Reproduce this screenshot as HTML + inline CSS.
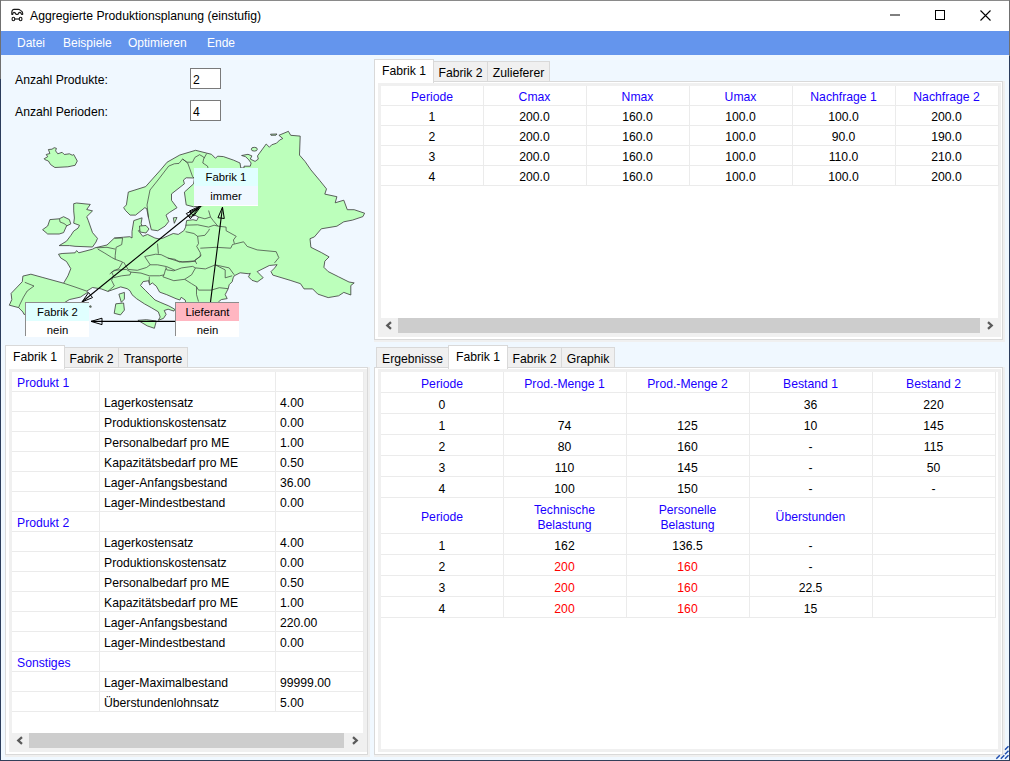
<!DOCTYPE html><html><head><meta charset="utf-8"><style>
html,body{margin:0;padding:0;width:1010px;height:761px;overflow:hidden;background:#F0F8FF;}
body{position:relative;font-family:"Liberation Sans",sans-serif;font-size:12.2px;color:#000;}
div{box-sizing:border-box;}
</style></head><body>
<div style="position:absolute;left:0px;top:0px;width:1010px;height:31px;background:#fff;"></div>
<div style="position:absolute;left:0px;top:31px;width:1010px;height:24px;background:#6495ED;"></div>
<div style="position:absolute;left:0px;top:0px;width:1010px;height:1px;background:#8a8a8a;"></div>
<div style="position:absolute;left:0px;top:0px;width:1px;height:79px;background:#707070;"></div>
<div style="position:absolute;left:0px;top:79px;width:1px;height:682px;background:#2b3d5c;"></div>
<div style="position:absolute;left:1009px;top:0px;width:1px;height:56px;background:#707070;"></div>
<div style="position:absolute;left:1009px;top:56px;width:1px;height:705px;background:#2b3d5c;"></div>
<div style="position:absolute;left:0px;top:760px;width:1010px;height:1px;background:#33405a;"></div>
<svg style="position:absolute;left:0;top:0" width="30" height="30" viewBox="0 0 30 30">
<path d="M11.8 14.3 L11.8 12.2 Q12 9.4 14.2 9.3 L18.2 9.3 Q19.3 9.4 20.4 10.4 L21.4 11.1 Q22.7 11.8 22.7 13.4 L22.7 14.3 L21.6 14.3 Q21 12.4 19.8 12.4 Q18.6 12.4 18 14.3 L16 14.3 Q15.2 12.3 14 12.3 Q12.9 12.4 12.8 14.3 Z" fill="none" stroke="#1a1a1a" stroke-width="1.15" stroke-linejoin="round"/>
<ellipse cx="13.4" cy="19" rx="1.35" ry="1.75" fill="none" stroke="#1a1a1a" stroke-width="1.15"/>
<ellipse cx="20.6" cy="19" rx="1.35" ry="1.75" fill="none" stroke="#1a1a1a" stroke-width="1.15"/>
<line x1="14.7" y1="19" x2="19.3" y2="19" stroke="#1a1a1a" stroke-width="1.15"/>
</svg>
<div style="position:absolute;left:30px;top:8px;height:16px;line-height:16px;text-align:left;white-space:nowrap;font-size:12.2px;color:#000;">Aggregierte Produktionsplanung (einstufig)</div>
<svg style="position:absolute;left:880px;top:8px" width="120" height="16">
<line x1="10" y1="7" x2="20" y2="7" stroke="#000" stroke-width="1"/>
<rect x="935.5" y="0" width="0" height="0"/>
</svg>
<div style="position:absolute;left:935px;top:10px;width:10px;height:10px;border:1px solid #000;"></div>
<svg style="position:absolute;left:980px;top:9.5px" width="12" height="12"><path d="M0.5 0.5 L10.5 10.5 M10.5 0.5 L0.5 10.5" stroke="#000" stroke-width="1.1"/></svg>
<div style="position:absolute;left:17px;top:35px;height:16px;line-height:16px;text-align:left;white-space:nowrap;color:#fff;font-size:12px;">Datei</div>
<div style="position:absolute;left:63px;top:35px;height:16px;line-height:16px;text-align:left;white-space:nowrap;color:#fff;font-size:12px;">Beispiele</div>
<div style="position:absolute;left:128px;top:35px;height:16px;line-height:16px;text-align:left;white-space:nowrap;color:#fff;font-size:12px;">Optimieren</div>
<div style="position:absolute;left:207px;top:35px;height:16px;line-height:16px;text-align:left;white-space:nowrap;color:#fff;font-size:12px;">Ende</div>
<div style="position:absolute;left:15px;top:72px;height:16px;line-height:16px;text-align:left;white-space:nowrap;">Anzahl Produkte:</div>
<div style="position:absolute;left:15px;top:104px;height:16px;line-height:16px;text-align:left;white-space:nowrap;">Anzahl Perioden:</div>
<div style="position:absolute;left:190px;top:68px;width:31px;height:21px;background:#fff;border:1px solid #7a7a7a;"></div>
<div style="position:absolute;left:193px;top:72px;height:16px;line-height:16px;text-align:left;white-space:nowrap;">2</div>
<div style="position:absolute;left:190px;top:100px;width:31px;height:21px;background:#fff;border:1px solid #7a7a7a;"></div>
<div style="position:absolute;left:193px;top:104px;height:16px;line-height:16px;text-align:left;white-space:nowrap;">4</div>
<svg style="position:absolute;left:0;top:0" width="380" height="345" viewBox="0 0 380 345">
<polygon points="9.3,305.2 11.8,299.6 11.1,293.4 22.3,281.7 22.9,276.1 30.9,274.2 42.1,277.3 63.6,283.2 67.9,275.9 70.8,268.7 66.5,261.5 60.7,257.9 58.5,254.2 62.1,253.5 75.1,252.8 76.6,250.6 78.8,252.8 92.5,249.2 95,247.8 107,245 114.3,238.1 123.5,237.2 129.9,236.7 132,238 132,231.6 133.8,220.6 142.1,217.8 141.1,223.3 143,228.9 138.4,230.7 142.8,236.3 147.6,234.4 154.9,238 159.4,239 163.2,238 173.2,233.5 178.3,234.4 183.8,230.7 185.6,227.1 186.6,220.6 193,219.7 196.7,220.6 198.5,217 194.8,215.1 189.3,217 191.1,212.4 197.6,208.7 201.3,205 204,205.5 193.6,206.8 186.2,204.9 184.4,192.1 193.6,183.8 194.5,178 186.2,177.8 183.4,180.1 184.4,183.8 171.5,193.9 171.5,200.3 177,207.7 169.7,212.3 166,215.1 168.7,221.5 165.1,226.1 157.7,230.7 151.3,229.8 148.5,217.8 146.7,208.6 144.8,207.7 135.6,215.1 130.1,215.1 125.5,210.5 123.7,207.7 126.4,204.9 128.3,192.1 145.7,186.6 160.5,170 167.1,162.2 179.8,155 195.6,150.3 206.7,153.1 211.5,154.3 215.4,158.2 217.8,156.2 223.4,156.6 233.7,160.2 240,163 240.8,168 244,168 244,166.2 250.3,166.2 251.1,163 248.8,159.9 245.6,156.7 241.6,155.5 248,154.3 251.9,155.9 250.3,159.1 255.1,161.4 258.3,159.1 257.5,155.9 266.2,144 269.4,147.2 271.7,144.8 276.5,143.2 279.7,140 282.8,138.5 278.9,135.3 288.4,131.3 290.7,135.3 300.2,136.1 299.5,155.1 305,161.4 310.9,169.9 319.6,180.3 326.5,188.9 324.8,194.1 336.9,196.7 335.2,202.8 343.8,200.2 347.3,209.7 354.2,209.7 364.6,213.2 362.9,216.6 352.5,220.1 343.8,221.8 336.9,226.2 321.3,228.8 314.4,236.9 310,238.7 310.9,247.3 321.3,252.5 329.1,256.9 324.8,261.2 323.9,267.3 328.2,271.6 338.6,276.8 349,282 354.2,282.9 350.8,285.5 350.8,295 343.8,292.4 338.6,295.8 328.2,297.6 317.8,294.1 312.6,288.9 304,288.9 300.5,283.7 290.1,280.3 272.8,275.1 271,271.6 274.5,268.1 277.1,264.7 269.3,265.5 257.2,271.6 260.6,275.1 263.2,277.7 257.2,282 252,280.3 248.5,276.8 250.3,273.3 249,273.8 240.1,272.8 234.2,275.8 233.2,277.8 232.2,281.7 229.2,284.7 228.2,288.7 225.2,294.6 227.2,298.6 221.3,299.6 218.3,302 215,310 190,310 185.6,302 185.2,300 181.2,297.3 179.9,300 176,298.7 166.8,294.7 159.6,292.1 156.3,286.2 152.3,282.9 149.7,284.9 148.4,280.3 147.7,280.9 143.1,281.6 140.5,285.5 145.8,290.8 149.7,294.7 155,300 160.9,302.6 168.8,305.9 174.7,309.2 174,311.1 168.1,309.2 164.2,310.5 166.1,314.4 163.5,318.4 158.3,320.3 160.2,317 158.3,311.8 151.7,307.9 144.5,303.9 136.6,298.7 132,294.7 130,290.8 127.2,288.7 120.7,286.9 107.9,291.4 101.2,288.9 92.5,287.5 86.7,291.1 87.9,292.2 80.4,297.1 69.3,299.6 64.4,302.7 60,306 30,312 24.1,314.5 22.9,312 18.6,307.6" fill="#BCFFBB" stroke="#3a3a3a" stroke-width="0.8" stroke-linejoin="round"/>
<polygon points="73.7,203.7 76.6,203 90.3,204.4 86.7,209.5 92.5,210.9 86.7,216.7 88.2,220.3 92.5,232.6 97.5,238.4 96,242 92.5,247 75,246.3 69.4,245.6 59.2,245.6 66.5,241.2 70.8,235.5 73.7,231.1 78,228.2 79.5,225.3 73.7,223.2 74.4,218 73.7,210.9" fill="#BCFFBB" stroke="#3a3a3a" stroke-width="0.8" stroke-linejoin="round"/>
<polygon points="42.6,229.7 47.7,226 49.9,219.6 59.2,218.8 63.6,216.7 69.4,219.6 70.8,223.9 66.5,226 63.6,232.6 59.2,234 47.7,234" fill="#BCFFBB" stroke="#3a3a3a" stroke-width="0.8" stroke-linejoin="round"/>
<polygon points="44.1,158.8 47.7,156.7 46.2,154.5 49.9,153.5 48.4,149.5 52,149.2 54.2,147.7 56.4,148.3 55.6,150.9 57.8,153.8 62.1,152.3 64.3,154.5 69.4,153.8 72.3,155.2 73.7,154.5 77.3,161 75.1,165.3 67.9,166.8 54.9,167.5 50.6,164.6 48.4,161 44.8,159.6" fill="#BCFFBB" stroke="#3a3a3a" stroke-width="0.8" stroke-linejoin="round"/>
<polygon points="118.9,294.2 124.4,292.4 124.4,299.1 121.3,302.3" fill="#BCFFBB" stroke="#3a3a3a" stroke-width="0.8" stroke-linejoin="round"/>
<polygon points="115.8,303.8 123.6,303 124.4,310.1 120.5,314.9 114.2,313.3" fill="#BCFFBB" stroke="#3a3a3a" stroke-width="0.8" stroke-linejoin="round"/>
<polygon points="137.9,320.3 146.4,319.7 156.3,321 154.4,328.3 147.3,325.9" fill="#BCFFBB" stroke="#3a3a3a" stroke-width="0.8" stroke-linejoin="round"/>
<polygon points="139.5,226 146,225.5 149,229 146,233 140,232" fill="#BCFFBB" stroke="#3a3a3a" stroke-width="0.8" stroke-linejoin="round"/>
<polygon points="173.3,217.8 177,217.5 174.3,223.3" fill="#BCFFBB" stroke="#3a3a3a" stroke-width="0.8" stroke-linejoin="round"/>
<polygon points="270.5,134.2 277,134 276,135.2 271,135.3" fill="#BCFFBB" stroke="#3a3a3a" stroke-width="0.8" stroke-linejoin="round"/>
<polygon points="89.6,306 91,305.8 91.2,307.2 89.8,307.2" fill="#BCFFBB" stroke="#3a3a3a" stroke-width="0.8" stroke-linejoin="round"/>
<polyline points="24.8,282.3 34,286 27.2,291 23.5,297.1 19.8,304.6 18.6,307.6" fill="none" stroke="#3a3a3a" stroke-width="0.7" stroke-linejoin="round"/>
<polyline points="63.6,283.2 75,287 86.7,291.1" fill="none" stroke="#3a3a3a" stroke-width="0.7" stroke-linejoin="round"/>
<polyline points="97.8,249.1 104.2,252.8 111.6,257.4 115.2,259.3 122.6,262 118.9,268.5 111.6,272.1 113.4,275.8 111.6,280.4 114.3,285.9 107.9,291.4" fill="none" stroke="#3a3a3a" stroke-width="0.7" stroke-linejoin="round"/>
<polyline points="96.8,247.8 107,247.3 115.2,249.1" fill="none" stroke="#3a3a3a" stroke-width="0.7" stroke-linejoin="round"/>
<polyline points="114.3,238.1 122.6,238.1 121.7,244.6 116.1,247.3 115.2,255.6 115.2,259.3" fill="none" stroke="#3a3a3a" stroke-width="0.7" stroke-linejoin="round"/>
<polyline points="144.7,256.5 155.7,254.2 161.2,254.7 168.6,258.3 175,259.3" fill="none" stroke="#3a3a3a" stroke-width="0.7" stroke-linejoin="round"/>
<polyline points="157.5,243.6 158.4,253.7" fill="none" stroke="#3a3a3a" stroke-width="0.7" stroke-linejoin="round"/>
<polyline points="144.7,256.5 150.2,264.8 157.5,264.8 166.7,266.6 175,270.3" fill="none" stroke="#3a3a3a" stroke-width="0.7" stroke-linejoin="round"/>
<polyline points="123.5,262 128.1,269.4 137.3,270.3 146.5,267.5 150.2,264.8" fill="none" stroke="#3a3a3a" stroke-width="0.7" stroke-linejoin="round"/>
<polyline points="109.7,274 114.3,270.3 126.3,269.4 130.9,272.1 130,274.9 121.7,275.8 113.4,277.7" fill="none" stroke="#3a3a3a" stroke-width="0.7" stroke-linejoin="round"/>
<polyline points="130.9,272.1 141,273.1 149.3,275.8 159.4,275.8 164,274.9 165.8,268.5" fill="none" stroke="#3a3a3a" stroke-width="0.7" stroke-linejoin="round"/>
<polyline points="149.3,276.7 149.3,283.2" fill="none" stroke="#3a3a3a" stroke-width="0.7" stroke-linejoin="round"/>
<polyline points="164,274.9 162.9,276.8 173.8,280.7 184.7,279.3 191.6,274.8 195.5,267.9" fill="none" stroke="#3a3a3a" stroke-width="0.7" stroke-linejoin="round"/>
<polyline points="184.7,279.3 191.6,283.7 196.5,286.7 198.5,290.1 211.4,290.1 219.3,287.7 228.2,288.7" fill="none" stroke="#3a3a3a" stroke-width="0.7" stroke-linejoin="round"/>
<polyline points="195.5,267.9 205.4,268.9 215.3,264.9 225.2,269.9 225.2,277.8 232.2,275.8" fill="none" stroke="#3a3a3a" stroke-width="0.7" stroke-linejoin="round"/>
<polyline points="215.3,264.9 229.2,267.9 234.2,274.8" fill="none" stroke="#3a3a3a" stroke-width="0.7" stroke-linejoin="round"/>
<polyline points="196.5,286.7 196.5,294.6 198.5,301.5" fill="none" stroke="#3a3a3a" stroke-width="0.7" stroke-linejoin="round"/>
<polyline points="165.8,266.9 166.8,269.9 173.8,270.8 181.7,267.9 192.6,266.4 195.5,267.9" fill="none" stroke="#3a3a3a" stroke-width="0.7" stroke-linejoin="round"/>
<polyline points="167.8,258 176.7,260.9 182.7,261.9 194.6,260.9 201.5,255" fill="none" stroke="#3a3a3a" stroke-width="0.7" stroke-linejoin="round"/>
<polyline points="175,259.3 179.2,262 188.4,262 195.7,261.1" fill="none" stroke="#3a3a3a" stroke-width="0.7" stroke-linejoin="round"/>
<polyline points="185.6,231.7 193.9,233.5 197.6,236.3 204.9,235.3 208.6,230.7 209.5,228.9" fill="none" stroke="#3a3a3a" stroke-width="0.7" stroke-linejoin="round"/>
<polyline points="197.6,236.3 198.5,243.6 196.7,246.4 200.3,252.8 200.3,256.5 194.8,260.2 196.7,263.9" fill="none" stroke="#3a3a3a" stroke-width="0.7" stroke-linejoin="round"/>
<polyline points="200.3,248.2 216,247.3 230.7,248.2 232.5,244.5 243.6,241.8 247.2,246.4 257.2,249.9 276.2,251.7 278.8,257.7 274.5,262.9" fill="none" stroke="#3a3a3a" stroke-width="0.7" stroke-linejoin="round"/>
<polyline points="217.8,226.1 226.1,227.1 226.1,230.7 236.2,236.3 233.4,240 234.4,243.6" fill="none" stroke="#3a3a3a" stroke-width="0.7" stroke-linejoin="round"/>
<polyline points="185.6,225.2 197.6,224.8 208.6,227.1 214.1,225.2 217.8,226.1" fill="none" stroke="#3a3a3a" stroke-width="0.7" stroke-linejoin="round"/>
<polyline points="198.5,217 204.9,218.8 210.5,217 213.2,220.6 217.8,226.1" fill="none" stroke="#3a3a3a" stroke-width="0.7" stroke-linejoin="round"/>
<polyline points="208.6,210.5 210.5,217" fill="none" stroke="#3a3a3a" stroke-width="0.7" stroke-linejoin="round"/>
<polyline points="148.5,217.8 147,205 150,190 158,180 168.7,166.1 174.3,163.8 179,163.4 182.6,159 186.9,162.2 192.5,162.2 194.9,157.4 199.6,154.7 203.6,157 204.4,158.2" fill="none" stroke="#3a3a3a" stroke-width="0.7" stroke-linejoin="round"/>
<polyline points="206.7,153.5 203.6,159 202.8,163 207.5,166.1 208,168" fill="none" stroke="#3a3a3a" stroke-width="0.7" stroke-linejoin="round"/>
<polyline points="182.6,159 187.7,163 192.5,176.4 194,178" fill="none" stroke="#3a3a3a" stroke-width="0.7" stroke-linejoin="round"/>
<ellipse cx="254.3" cy="149.2" rx="3" ry="1.9" fill="#BCFFBB" stroke="#3a3a3a" stroke-width="0.8"/>
<polyline points="59.5,218.8 60,222 64,223.5 67,225.8" fill="none" stroke="#3a3a3a" stroke-width="0.7"/>
<line x1="82" y1="302" x2="201" y2="205.5" stroke="#000" stroke-width="1.1"/>
<polygon points="82,302 88.53,292.59 92.56,297.56" fill="none" stroke="#000" stroke-width="1"/>
<polygon points="201.6,205.4 193.56,216.14 189.41,211.00" fill="none" stroke="#000" stroke-width="1"/>
<polygon points="198.5,207.9 190.46,218.64 186.31,213.50" fill="none" stroke="#000" stroke-width="1"/>
<line x1="210.5" y1="302" x2="222.5" y2="207.2" stroke="#000" stroke-width="1.1"/>
<polygon points="222.5,207.2 224.29,218.51 217.94,217.71" fill="none" stroke="#000" stroke-width="1"/>
<line x1="91" y1="321.4" x2="175" y2="321.4" stroke="#000" stroke-width="1.1"/>
<polygon points="91,321.4 102.00,318.20 102.00,324.60" fill="none" stroke="#000" stroke-width="1"/>
</svg>
<div style="position:absolute;left:194px;top:168px;width:64px;height:38px;font-size:11.3px;"><div style="height:18px;background:#E0FFFF;text-align:center;line-height:18px;">Fabrik 1</div><div style="height:20px;background:#F0F8FF;text-align:center;line-height:20px;overflow:hidden;">immer</div></div>
<div style="position:absolute;left:194px;top:205px;width:64px;height:1px;background:#fff;"></div>
<div style="position:absolute;left:25px;top:302px;width:64px;height:34px;border-left:1px solid #8c8c8c;border-top:1px solid #8c8c8c;font-size:11.3px;"><div style="height:18px;background:#E0FFFF;text-align:center;line-height:18px;">Fabrik 2</div><div style="height:16px;background:#FFFFFF;text-align:center;line-height:18px;overflow:hidden;">nein</div></div>
<div style="position:absolute;left:175px;top:302px;width:64px;height:34px;border-left:1px solid #8c8c8c;border-top:1px solid #8c8c8c;font-size:11.3px;"><div style="height:18px;background:#FFB6C1;text-align:center;line-height:18px;">Lieferant</div><div style="height:16px;background:#FFFFFF;text-align:center;line-height:18px;overflow:hidden;">nein</div></div>
<div style="position:absolute;left:433px;top:61px;width:55px;height:20px;background:#F0F0F0;border:1px solid #D9D9D9;border-bottom:none;"></div>
<div style="position:absolute;left:433px;top:63px;width:55px;height:20px;line-height:20px;text-align:center;white-space:nowrap;">Fabrik 2</div>
<div style="position:absolute;left:487px;top:61px;width:63px;height:20px;background:#F0F0F0;border:1px solid #D9D9D9;border-bottom:none;"></div>
<div style="position:absolute;left:487px;top:63px;width:63px;height:20px;line-height:20px;text-align:center;white-space:nowrap;">Zulieferer</div>
<div style="position:absolute;left:1003px;top:81px;width:2px;height:261px;background:#F0F0F0;"></div>
<div style="position:absolute;left:374px;top:340px;width:631px;height:2px;background:#F0F0F0;"></div>
<div style="position:absolute;left:374px;top:81px;width:629px;height:259px;background:#fff;border:1px solid #D9D9D9;"></div>
<div style="position:absolute;left:374px;top:59px;width:60px;height:24px;background:#fff;border:1px solid #D9D9D9;border-bottom:none;"></div>
<div style="position:absolute;left:374px;top:61px;width:60px;height:20px;line-height:20px;text-align:center;white-space:nowrap;">Fabrik 1</div>
<div style="position:absolute;left:64px;top:347px;width:55px;height:20px;background:#F0F0F0;border:1px solid #D9D9D9;border-bottom:none;"></div>
<div style="position:absolute;left:64px;top:349px;width:55px;height:20px;line-height:20px;text-align:center;white-space:nowrap;">Fabrik 2</div>
<div style="position:absolute;left:118px;top:347px;width:70px;height:20px;background:#F0F0F0;border:1px solid #D9D9D9;border-bottom:none;"></div>
<div style="position:absolute;left:118px;top:349px;width:70px;height:20px;line-height:20px;text-align:center;white-space:nowrap;">Transporte</div>
<div style="position:absolute;left:368px;top:367px;width:2px;height:390px;background:#F0F0F0;"></div>
<div style="position:absolute;left:5px;top:755px;width:365px;height:2px;background:#F0F0F0;"></div>
<div style="position:absolute;left:5px;top:367px;width:363px;height:388px;background:#fff;border:1px solid #D9D9D9;"></div>
<div style="position:absolute;left:5px;top:345px;width:60px;height:24px;background:#fff;border:1px solid #D9D9D9;border-bottom:none;"></div>
<div style="position:absolute;left:5px;top:347px;width:60px;height:20px;line-height:20px;text-align:center;white-space:nowrap;">Fabrik 1</div>
<div style="position:absolute;left:376px;top:347px;width:73px;height:20px;background:#F0F0F0;border:1px solid #D9D9D9;border-bottom:none;"></div>
<div style="position:absolute;left:376px;top:349px;width:73px;height:20px;line-height:20px;text-align:center;white-space:nowrap;">Ergebnisse</div>
<div style="position:absolute;left:507px;top:347px;width:55px;height:20px;background:#F0F0F0;border:1px solid #D9D9D9;border-bottom:none;"></div>
<div style="position:absolute;left:507px;top:349px;width:55px;height:20px;line-height:20px;text-align:center;white-space:nowrap;">Fabrik 2</div>
<div style="position:absolute;left:561px;top:347px;width:54px;height:20px;background:#F0F0F0;border:1px solid #D9D9D9;border-bottom:none;"></div>
<div style="position:absolute;left:561px;top:349px;width:54px;height:20px;line-height:20px;text-align:center;white-space:nowrap;">Graphik</div>
<div style="position:absolute;left:1003px;top:367px;width:2px;height:390px;background:#F0F0F0;"></div>
<div style="position:absolute;left:374px;top:755px;width:631px;height:2px;background:#F0F0F0;"></div>
<div style="position:absolute;left:374px;top:367px;width:629px;height:388px;background:#fff;border:1px solid #D9D9D9;"></div>
<div style="position:absolute;left:448px;top:345px;width:60px;height:24px;background:#fff;border:1px solid #D9D9D9;border-bottom:none;"></div>
<div style="position:absolute;left:448px;top:347px;width:60px;height:20px;line-height:20px;text-align:center;white-space:nowrap;">Fabrik 1</div>
<div style="position:absolute;left:378px;top:83px;width:623px;height:254px;background:#F0F0F0;"></div>
<div style="position:absolute;left:381px;top:86px;width:617px;height:232px;background:#fff;"></div>
<div style="position:absolute;left:381px;top:105px;width:617px;height:1px;background:#EBEBEB;"></div>
<div style="position:absolute;left:381px;top:125px;width:617px;height:1px;background:#EBEBEB;"></div>
<div style="position:absolute;left:381px;top:145px;width:617px;height:1px;background:#EBEBEB;"></div>
<div style="position:absolute;left:381px;top:165px;width:617px;height:1px;background:#EBEBEB;"></div>
<div style="position:absolute;left:381px;top:185px;width:617px;height:1px;background:#EBEBEB;"></div>
<div style="position:absolute;left:483px;top:86px;width:1px;height:100px;background:#EBEBEB;"></div>
<div style="position:absolute;left:586px;top:86px;width:1px;height:100px;background:#EBEBEB;"></div>
<div style="position:absolute;left:689px;top:86px;width:1px;height:100px;background:#EBEBEB;"></div>
<div style="position:absolute;left:792px;top:86px;width:1px;height:100px;background:#EBEBEB;"></div>
<div style="position:absolute;left:895px;top:86px;width:1px;height:100px;background:#EBEBEB;"></div>
<div style="position:absolute;left:998px;top:86px;width:1px;height:100px;background:#EBEBEB;"></div>
<div style="position:absolute;left:381px;top:88px;width:102px;height:19px;line-height:19px;text-align:center;white-space:nowrap;color:#1a00ff;">Periode</div>
<div style="position:absolute;left:483px;top:88px;width:103px;height:19px;line-height:19px;text-align:center;white-space:nowrap;color:#1a00ff;">Cmax</div>
<div style="position:absolute;left:586px;top:88px;width:103px;height:19px;line-height:19px;text-align:center;white-space:nowrap;color:#1a00ff;">Nmax</div>
<div style="position:absolute;left:689px;top:88px;width:103px;height:19px;line-height:19px;text-align:center;white-space:nowrap;color:#1a00ff;">Umax</div>
<div style="position:absolute;left:792px;top:88px;width:103px;height:19px;line-height:19px;text-align:center;white-space:nowrap;color:#1a00ff;">Nachfrage 1</div>
<div style="position:absolute;left:895px;top:88px;width:103px;height:19px;line-height:19px;text-align:center;white-space:nowrap;color:#1a00ff;">Nachfrage 2</div>
<div style="position:absolute;left:381px;top:108px;width:102px;height:19px;line-height:19px;text-align:center;white-space:nowrap;">1</div>
<div style="position:absolute;left:483px;top:108px;width:103px;height:19px;line-height:19px;text-align:center;white-space:nowrap;">200.0</div>
<div style="position:absolute;left:586px;top:108px;width:103px;height:19px;line-height:19px;text-align:center;white-space:nowrap;">160.0</div>
<div style="position:absolute;left:689px;top:108px;width:103px;height:19px;line-height:19px;text-align:center;white-space:nowrap;">100.0</div>
<div style="position:absolute;left:792px;top:108px;width:103px;height:19px;line-height:19px;text-align:center;white-space:nowrap;">100.0</div>
<div style="position:absolute;left:895px;top:108px;width:103px;height:19px;line-height:19px;text-align:center;white-space:nowrap;">200.0</div>
<div style="position:absolute;left:381px;top:128px;width:102px;height:19px;line-height:19px;text-align:center;white-space:nowrap;">2</div>
<div style="position:absolute;left:483px;top:128px;width:103px;height:19px;line-height:19px;text-align:center;white-space:nowrap;">200.0</div>
<div style="position:absolute;left:586px;top:128px;width:103px;height:19px;line-height:19px;text-align:center;white-space:nowrap;">160.0</div>
<div style="position:absolute;left:689px;top:128px;width:103px;height:19px;line-height:19px;text-align:center;white-space:nowrap;">100.0</div>
<div style="position:absolute;left:792px;top:128px;width:103px;height:19px;line-height:19px;text-align:center;white-space:nowrap;">90.0</div>
<div style="position:absolute;left:895px;top:128px;width:103px;height:19px;line-height:19px;text-align:center;white-space:nowrap;">190.0</div>
<div style="position:absolute;left:381px;top:148px;width:102px;height:19px;line-height:19px;text-align:center;white-space:nowrap;">3</div>
<div style="position:absolute;left:483px;top:148px;width:103px;height:19px;line-height:19px;text-align:center;white-space:nowrap;">200.0</div>
<div style="position:absolute;left:586px;top:148px;width:103px;height:19px;line-height:19px;text-align:center;white-space:nowrap;">160.0</div>
<div style="position:absolute;left:689px;top:148px;width:103px;height:19px;line-height:19px;text-align:center;white-space:nowrap;">100.0</div>
<div style="position:absolute;left:792px;top:148px;width:103px;height:19px;line-height:19px;text-align:center;white-space:nowrap;">110.0</div>
<div style="position:absolute;left:895px;top:148px;width:103px;height:19px;line-height:19px;text-align:center;white-space:nowrap;">210.0</div>
<div style="position:absolute;left:381px;top:168px;width:102px;height:19px;line-height:19px;text-align:center;white-space:nowrap;">4</div>
<div style="position:absolute;left:483px;top:168px;width:103px;height:19px;line-height:19px;text-align:center;white-space:nowrap;">200.0</div>
<div style="position:absolute;left:586px;top:168px;width:103px;height:19px;line-height:19px;text-align:center;white-space:nowrap;">160.0</div>
<div style="position:absolute;left:689px;top:168px;width:103px;height:19px;line-height:19px;text-align:center;white-space:nowrap;">100.0</div>
<div style="position:absolute;left:792px;top:168px;width:103px;height:19px;line-height:19px;text-align:center;white-space:nowrap;">100.0</div>
<div style="position:absolute;left:895px;top:168px;width:103px;height:19px;line-height:19px;text-align:center;white-space:nowrap;">200.0</div>
<div style="position:absolute;left:381px;top:318px;width:617px;height:15px;background:#F0F0F0;"></div>
<div style="position:absolute;left:398px;top:318px;width:582px;height:15px;background:#CDCDCD;"></div>
<svg style="position:absolute;left:385px;top:321px" width="8" height="9"><path d="M6 1.2 L2.3 4.5 L6 7.8" fill="none" stroke="#5a5a5a" stroke-width="2.3"/></svg>
<svg style="position:absolute;left:986px;top:321px" width="8" height="9"><path d="M2 1.2 L5.7 4.5 L2 7.8" fill="none" stroke="#5a5a5a" stroke-width="2.3"/></svg>
<div style="position:absolute;left:9px;top:369px;width:358px;height:383px;background:#F0F0F0;"></div>
<div style="position:absolute;left:12px;top:372px;width:351px;height:361px;background:#fff;"></div>
<div style="position:absolute;left:12px;top:391px;width:351px;height:1px;background:#EBEBEB;"></div>
<div style="position:absolute;left:17px;top:374px;height:19px;line-height:19px;text-align:left;white-space:nowrap;color:#1a00ff;">Produkt 1</div>
<div style="position:absolute;left:12px;top:411px;width:351px;height:1px;background:#EBEBEB;"></div>
<div style="position:absolute;left:104px;top:394px;height:19px;line-height:19px;text-align:left;white-space:nowrap;">Lagerkostensatz</div>
<div style="position:absolute;left:280px;top:394px;height:19px;line-height:19px;text-align:left;white-space:nowrap;">4.00</div>
<div style="position:absolute;left:12px;top:431px;width:351px;height:1px;background:#EBEBEB;"></div>
<div style="position:absolute;left:104px;top:414px;height:19px;line-height:19px;text-align:left;white-space:nowrap;">Produktionskostensatz</div>
<div style="position:absolute;left:280px;top:414px;height:19px;line-height:19px;text-align:left;white-space:nowrap;">0.00</div>
<div style="position:absolute;left:12px;top:451px;width:351px;height:1px;background:#EBEBEB;"></div>
<div style="position:absolute;left:104px;top:434px;height:19px;line-height:19px;text-align:left;white-space:nowrap;">Personalbedarf pro ME</div>
<div style="position:absolute;left:280px;top:434px;height:19px;line-height:19px;text-align:left;white-space:nowrap;">1.00</div>
<div style="position:absolute;left:12px;top:471px;width:351px;height:1px;background:#EBEBEB;"></div>
<div style="position:absolute;left:104px;top:454px;height:19px;line-height:19px;text-align:left;white-space:nowrap;">Kapazitätsbedarf pro ME</div>
<div style="position:absolute;left:280px;top:454px;height:19px;line-height:19px;text-align:left;white-space:nowrap;">0.50</div>
<div style="position:absolute;left:12px;top:491px;width:351px;height:1px;background:#EBEBEB;"></div>
<div style="position:absolute;left:104px;top:474px;height:19px;line-height:19px;text-align:left;white-space:nowrap;">Lager-Anfangsbestand</div>
<div style="position:absolute;left:280px;top:474px;height:19px;line-height:19px;text-align:left;white-space:nowrap;">36.00</div>
<div style="position:absolute;left:12px;top:511px;width:351px;height:1px;background:#EBEBEB;"></div>
<div style="position:absolute;left:104px;top:494px;height:19px;line-height:19px;text-align:left;white-space:nowrap;">Lager-Mindestbestand</div>
<div style="position:absolute;left:280px;top:494px;height:19px;line-height:19px;text-align:left;white-space:nowrap;">0.00</div>
<div style="position:absolute;left:12px;top:531px;width:351px;height:1px;background:#EBEBEB;"></div>
<div style="position:absolute;left:17px;top:514px;height:19px;line-height:19px;text-align:left;white-space:nowrap;color:#1a00ff;">Produkt 2</div>
<div style="position:absolute;left:12px;top:551px;width:351px;height:1px;background:#EBEBEB;"></div>
<div style="position:absolute;left:104px;top:534px;height:19px;line-height:19px;text-align:left;white-space:nowrap;">Lagerkostensatz</div>
<div style="position:absolute;left:280px;top:534px;height:19px;line-height:19px;text-align:left;white-space:nowrap;">4.00</div>
<div style="position:absolute;left:12px;top:571px;width:351px;height:1px;background:#EBEBEB;"></div>
<div style="position:absolute;left:104px;top:554px;height:19px;line-height:19px;text-align:left;white-space:nowrap;">Produktionskostensatz</div>
<div style="position:absolute;left:280px;top:554px;height:19px;line-height:19px;text-align:left;white-space:nowrap;">0.00</div>
<div style="position:absolute;left:12px;top:591px;width:351px;height:1px;background:#EBEBEB;"></div>
<div style="position:absolute;left:104px;top:574px;height:19px;line-height:19px;text-align:left;white-space:nowrap;">Personalbedarf pro ME</div>
<div style="position:absolute;left:280px;top:574px;height:19px;line-height:19px;text-align:left;white-space:nowrap;">0.50</div>
<div style="position:absolute;left:12px;top:611px;width:351px;height:1px;background:#EBEBEB;"></div>
<div style="position:absolute;left:104px;top:594px;height:19px;line-height:19px;text-align:left;white-space:nowrap;">Kapazitätsbedarf pro ME</div>
<div style="position:absolute;left:280px;top:594px;height:19px;line-height:19px;text-align:left;white-space:nowrap;">1.00</div>
<div style="position:absolute;left:12px;top:631px;width:351px;height:1px;background:#EBEBEB;"></div>
<div style="position:absolute;left:104px;top:614px;height:19px;line-height:19px;text-align:left;white-space:nowrap;">Lager-Anfangsbestand</div>
<div style="position:absolute;left:280px;top:614px;height:19px;line-height:19px;text-align:left;white-space:nowrap;">220.00</div>
<div style="position:absolute;left:12px;top:651px;width:351px;height:1px;background:#EBEBEB;"></div>
<div style="position:absolute;left:104px;top:634px;height:19px;line-height:19px;text-align:left;white-space:nowrap;">Lager-Mindestbestand</div>
<div style="position:absolute;left:280px;top:634px;height:19px;line-height:19px;text-align:left;white-space:nowrap;">0.00</div>
<div style="position:absolute;left:12px;top:671px;width:351px;height:1px;background:#EBEBEB;"></div>
<div style="position:absolute;left:17px;top:654px;height:19px;line-height:19px;text-align:left;white-space:nowrap;color:#1a00ff;">Sonstiges</div>
<div style="position:absolute;left:12px;top:691px;width:351px;height:1px;background:#EBEBEB;"></div>
<div style="position:absolute;left:104px;top:674px;height:19px;line-height:19px;text-align:left;white-space:nowrap;">Lager-Maximalbestand</div>
<div style="position:absolute;left:280px;top:674px;height:19px;line-height:19px;text-align:left;white-space:nowrap;">99999.00</div>
<div style="position:absolute;left:12px;top:711px;width:351px;height:1px;background:#EBEBEB;"></div>
<div style="position:absolute;left:104px;top:694px;height:19px;line-height:19px;text-align:left;white-space:nowrap;">Überstundenlohnsatz</div>
<div style="position:absolute;left:280px;top:694px;height:19px;line-height:19px;text-align:left;white-space:nowrap;">5.00</div>
<div style="position:absolute;left:99px;top:372px;width:1px;height:340px;background:#EBEBEB;"></div>
<div style="position:absolute;left:275px;top:372px;width:1px;height:340px;background:#EBEBEB;"></div>
<div style="position:absolute;left:363px;top:372px;width:1px;height:340px;background:#EBEBEB;"></div>
<div style="position:absolute;left:12px;top:733px;width:351px;height:19px;background:#F0F0F0;"></div>
<div style="position:absolute;left:29px;top:733px;width:315px;height:15px;background:#CDCDCD;"></div>
<svg style="position:absolute;left:16px;top:736px" width="8" height="9"><path d="M6 1.2 L2.3 4.5 L6 7.8" fill="none" stroke="#5a5a5a" stroke-width="2.3"/></svg>
<svg style="position:absolute;left:351px;top:736px" width="8" height="9"><path d="M2 1.2 L5.7 4.5 L2 7.8" fill="none" stroke="#5a5a5a" stroke-width="2.3"/></svg>
<div style="position:absolute;left:378px;top:369px;width:623px;height:383px;background:#F0F0F0;"></div>
<div style="position:absolute;left:381px;top:372px;width:617px;height:377px;background:#fff;"></div>
<div style="position:absolute;left:381px;top:392px;width:615px;height:1px;background:#EBEBEB;"></div>
<div style="position:absolute;left:381px;top:413px;width:615px;height:1px;background:#EBEBEB;"></div>
<div style="position:absolute;left:381px;top:434px;width:615px;height:1px;background:#EBEBEB;"></div>
<div style="position:absolute;left:381px;top:455px;width:615px;height:1px;background:#EBEBEB;"></div>
<div style="position:absolute;left:381px;top:476px;width:615px;height:1px;background:#EBEBEB;"></div>
<div style="position:absolute;left:381px;top:497px;width:615px;height:1px;background:#EBEBEB;"></div>
<div style="position:absolute;left:381px;top:533px;width:615px;height:1px;background:#EBEBEB;"></div>
<div style="position:absolute;left:381px;top:554px;width:615px;height:1px;background:#EBEBEB;"></div>
<div style="position:absolute;left:381px;top:575px;width:615px;height:1px;background:#EBEBEB;"></div>
<div style="position:absolute;left:381px;top:596px;width:615px;height:1px;background:#EBEBEB;"></div>
<div style="position:absolute;left:381px;top:617px;width:615px;height:1px;background:#EBEBEB;"></div>
<div style="position:absolute;left:503px;top:372px;width:1px;height:246px;background:#EBEBEB;"></div>
<div style="position:absolute;left:626px;top:372px;width:1px;height:246px;background:#EBEBEB;"></div>
<div style="position:absolute;left:749px;top:372px;width:1px;height:246px;background:#EBEBEB;"></div>
<div style="position:absolute;left:872px;top:372px;width:1px;height:246px;background:#EBEBEB;"></div>
<div style="position:absolute;left:995px;top:372px;width:1px;height:246px;background:#EBEBEB;"></div>
<div style="position:absolute;left:381px;top:374px;width:122px;height:20px;line-height:20px;text-align:center;white-space:nowrap;color:#1a00ff;">Periode</div>
<div style="position:absolute;left:503px;top:374px;width:123px;height:20px;line-height:20px;text-align:center;white-space:nowrap;color:#1a00ff;">Prod.-Menge 1</div>
<div style="position:absolute;left:626px;top:374px;width:123px;height:20px;line-height:20px;text-align:center;white-space:nowrap;color:#1a00ff;">Prod.-Menge 2</div>
<div style="position:absolute;left:749px;top:374px;width:123px;height:20px;line-height:20px;text-align:center;white-space:nowrap;color:#1a00ff;">Bestand 1</div>
<div style="position:absolute;left:872px;top:374px;width:123px;height:20px;line-height:20px;text-align:center;white-space:nowrap;color:#1a00ff;">Bestand 2</div>
<div style="position:absolute;left:381px;top:395px;width:122px;height:20px;line-height:20px;text-align:center;white-space:nowrap;">0</div>
<div style="position:absolute;left:503px;top:395px;width:123px;height:20px;line-height:20px;text-align:center;white-space:nowrap;"></div>
<div style="position:absolute;left:626px;top:395px;width:123px;height:20px;line-height:20px;text-align:center;white-space:nowrap;"></div>
<div style="position:absolute;left:749px;top:395px;width:123px;height:20px;line-height:20px;text-align:center;white-space:nowrap;">36</div>
<div style="position:absolute;left:872px;top:395px;width:123px;height:20px;line-height:20px;text-align:center;white-space:nowrap;">220</div>
<div style="position:absolute;left:381px;top:416px;width:122px;height:20px;line-height:20px;text-align:center;white-space:nowrap;">1</div>
<div style="position:absolute;left:503px;top:416px;width:123px;height:20px;line-height:20px;text-align:center;white-space:nowrap;">74</div>
<div style="position:absolute;left:626px;top:416px;width:123px;height:20px;line-height:20px;text-align:center;white-space:nowrap;">125</div>
<div style="position:absolute;left:749px;top:416px;width:123px;height:20px;line-height:20px;text-align:center;white-space:nowrap;">10</div>
<div style="position:absolute;left:872px;top:416px;width:123px;height:20px;line-height:20px;text-align:center;white-space:nowrap;">145</div>
<div style="position:absolute;left:381px;top:437px;width:122px;height:20px;line-height:20px;text-align:center;white-space:nowrap;">2</div>
<div style="position:absolute;left:503px;top:437px;width:123px;height:20px;line-height:20px;text-align:center;white-space:nowrap;">80</div>
<div style="position:absolute;left:626px;top:437px;width:123px;height:20px;line-height:20px;text-align:center;white-space:nowrap;">160</div>
<div style="position:absolute;left:749px;top:437px;width:123px;height:20px;line-height:20px;text-align:center;white-space:nowrap;">-</div>
<div style="position:absolute;left:872px;top:437px;width:123px;height:20px;line-height:20px;text-align:center;white-space:nowrap;">115</div>
<div style="position:absolute;left:381px;top:458px;width:122px;height:20px;line-height:20px;text-align:center;white-space:nowrap;">3</div>
<div style="position:absolute;left:503px;top:458px;width:123px;height:20px;line-height:20px;text-align:center;white-space:nowrap;">110</div>
<div style="position:absolute;left:626px;top:458px;width:123px;height:20px;line-height:20px;text-align:center;white-space:nowrap;">145</div>
<div style="position:absolute;left:749px;top:458px;width:123px;height:20px;line-height:20px;text-align:center;white-space:nowrap;">-</div>
<div style="position:absolute;left:872px;top:458px;width:123px;height:20px;line-height:20px;text-align:center;white-space:nowrap;">50</div>
<div style="position:absolute;left:381px;top:479px;width:122px;height:20px;line-height:20px;text-align:center;white-space:nowrap;">4</div>
<div style="position:absolute;left:503px;top:479px;width:123px;height:20px;line-height:20px;text-align:center;white-space:nowrap;">100</div>
<div style="position:absolute;left:626px;top:479px;width:123px;height:20px;line-height:20px;text-align:center;white-space:nowrap;">150</div>
<div style="position:absolute;left:749px;top:479px;width:123px;height:20px;line-height:20px;text-align:center;white-space:nowrap;">-</div>
<div style="position:absolute;left:872px;top:479px;width:123px;height:20px;line-height:20px;text-align:center;white-space:nowrap;">-</div>
<div style="position:absolute;left:381px;top:500px;width:122px;height:35px;line-height:35px;text-align:center;white-space:nowrap;color:#1a00ff;">Periode</div>
<div style="position:absolute;left:503px;top:500px;width:123px;height:35px;text-align:center;color:#1a00ff;line-height:15px;padding-top:3px;">Technische<br>Belastung</div>
<div style="position:absolute;left:626px;top:500px;width:123px;height:35px;text-align:center;color:#1a00ff;line-height:15px;padding-top:3px;">Personelle<br>Belastung</div>
<div style="position:absolute;left:749px;top:500px;width:123px;height:35px;line-height:35px;text-align:center;white-space:nowrap;color:#1a00ff;">Überstunden</div>
<div style="position:absolute;left:872px;top:500px;width:123px;height:35px;line-height:35px;text-align:center;white-space:nowrap;color:#1a00ff;"></div>
<div style="position:absolute;left:381px;top:536px;width:122px;height:20px;line-height:20px;text-align:center;white-space:nowrap;">1</div>
<div style="position:absolute;left:503px;top:536px;width:123px;height:20px;line-height:20px;text-align:center;white-space:nowrap;">162</div>
<div style="position:absolute;left:626px;top:536px;width:123px;height:20px;line-height:20px;text-align:center;white-space:nowrap;">136.5</div>
<div style="position:absolute;left:749px;top:536px;width:123px;height:20px;line-height:20px;text-align:center;white-space:nowrap;">-</div>
<div style="position:absolute;left:381px;top:557px;width:122px;height:20px;line-height:20px;text-align:center;white-space:nowrap;">2</div>
<div style="position:absolute;left:503px;top:557px;width:123px;height:20px;line-height:20px;text-align:center;white-space:nowrap;"><span style="color:#f00">200</span></div>
<div style="position:absolute;left:626px;top:557px;width:123px;height:20px;line-height:20px;text-align:center;white-space:nowrap;"><span style="color:#f00">160</span></div>
<div style="position:absolute;left:749px;top:557px;width:123px;height:20px;line-height:20px;text-align:center;white-space:nowrap;">-</div>
<div style="position:absolute;left:381px;top:578px;width:122px;height:20px;line-height:20px;text-align:center;white-space:nowrap;">3</div>
<div style="position:absolute;left:503px;top:578px;width:123px;height:20px;line-height:20px;text-align:center;white-space:nowrap;"><span style="color:#f00">200</span></div>
<div style="position:absolute;left:626px;top:578px;width:123px;height:20px;line-height:20px;text-align:center;white-space:nowrap;"><span style="color:#f00">160</span></div>
<div style="position:absolute;left:749px;top:578px;width:123px;height:20px;line-height:20px;text-align:center;white-space:nowrap;">22.5</div>
<div style="position:absolute;left:381px;top:599px;width:122px;height:20px;line-height:20px;text-align:center;white-space:nowrap;">4</div>
<div style="position:absolute;left:503px;top:599px;width:123px;height:20px;line-height:20px;text-align:center;white-space:nowrap;"><span style="color:#f00">200</span></div>
<div style="position:absolute;left:626px;top:599px;width:123px;height:20px;line-height:20px;text-align:center;white-space:nowrap;"><span style="color:#f00">160</span></div>
<div style="position:absolute;left:749px;top:599px;width:123px;height:20px;line-height:20px;text-align:center;white-space:nowrap;">15</div>
<svg style="position:absolute;left:990px;top:740px" width="20" height="20" viewBox="990 740 20 20">
<path d="M996.3 758.8 L999.8 755.3 M1000.8 758.8 L1004.3 755.3 M1005 758.8 L1008.5 755.3 M1005 754.3 L1008.5 750.8 M1005 749.8 L1008.5 746.3" stroke="#1f4fb0" stroke-width="1.5"/></svg>
</body></html>
